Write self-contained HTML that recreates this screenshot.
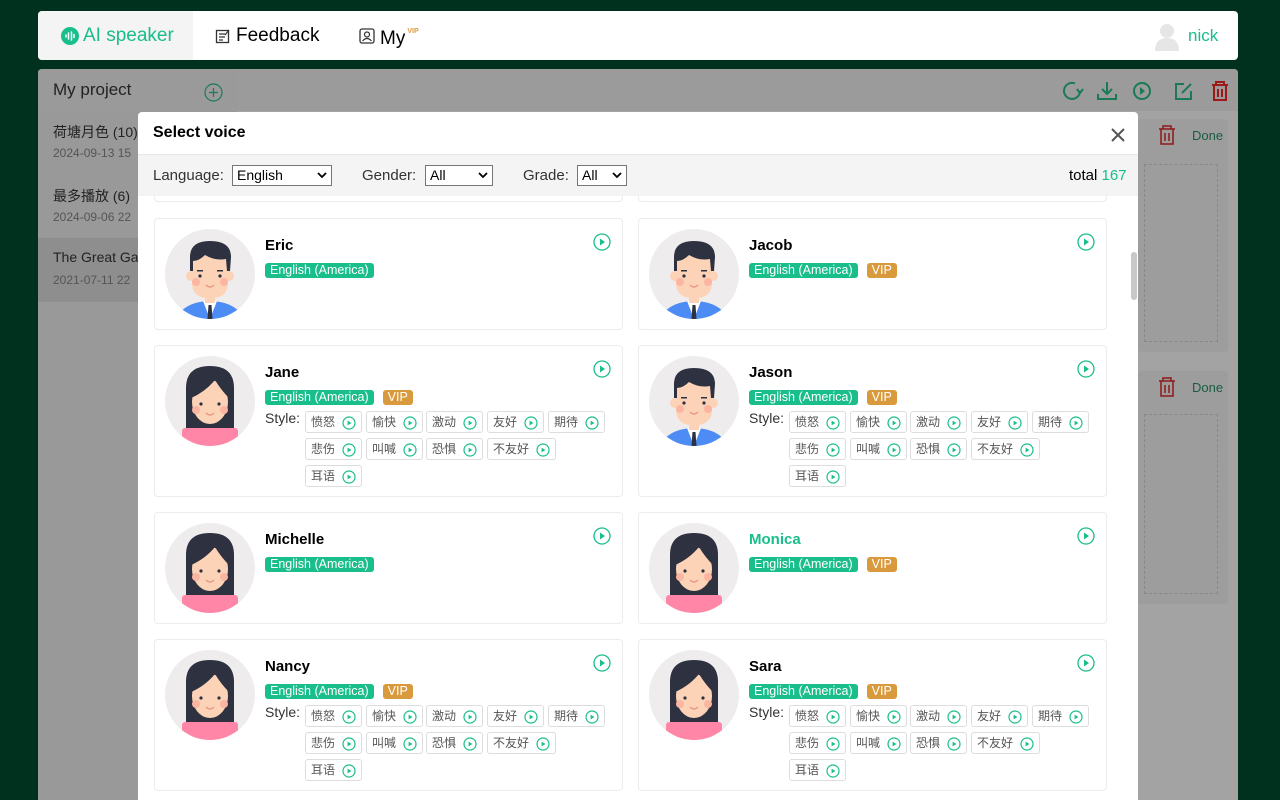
<!DOCTYPE html>
<html style="height:800px;overflow:hidden"><head><meta charset="utf-8">
<style>
*{box-sizing:border-box;margin:0;padding:0}
body{width:1280px;height:800px;overflow:hidden;background:#00311f;font-family:"Liberation Sans","Noto Sans CJK SC",sans-serif;position:relative;color:#000}
.abs{position:absolute}
.top{left:38px;top:11px;width:1200px;height:49px;background:#fff;border-radius:4px;overflow:hidden}
.tab{position:absolute;top:0;height:49px;line-height:49px;font-size:19px}
.main{left:38px;top:69px;width:1200px;height:731px;background:#a3a3a3;border-radius:4px 4px 0 0;overflow:hidden}
.side{left:0;top:0;width:199px;height:731px;background:#999}
.modal{left:138px;top:112px;width:1000px;height:688px;background:#fff;border-radius:4px 4px 0 0;overflow:hidden}
.fb{left:0;top:43px;width:1000px;height:41px;background:#f4f4f4;font-size:15px;color:#333}
.sel{position:absolute;top:10px;height:21px;border:1px solid #767676;background:#fff;font-size:14px;line-height:19px;padding-left:4px;color:#000}
.sel svg{position:absolute;right:4px;top:6px}
.card{position:absolute;width:469px;border:1px solid #ececec;border-radius:4px;background:#fff}
.av{position:absolute;left:10px;top:10px;width:90px;height:90px}
.nm{position:absolute;left:110px;top:18px;font-size:15px;font-weight:bold}
.tags{position:absolute;left:110px;top:44px;height:15px;font-size:12.5px;white-space:nowrap}
.tg{display:inline-block;background:#19be8b;color:#fff;border-radius:3px;padding:0 5px;line-height:15px;height:15px;vertical-align:top}
.vip{display:inline-block;background:#d99a3d;color:#fff;border-radius:3px;padding:0 5px;line-height:15px;height:15px;margin-left:9px;vertical-align:top}
.pl{position:absolute;right:11px;top:14px}
.sty{position:absolute;left:110px;top:64px;font-size:14px;color:#333}
.chips{position:absolute;left:150px;top:65px;width:310px}
.ch{position:absolute;height:22px;border:1px solid #ddd;border-radius:3px;font-size:12px;color:#555;line-height:20px;padding-left:5px;background:#fff}
.ch svg{position:absolute;right:5px;top:4px}
</style></head><body>
<svg width="0" height="0" style="position:absolute">
<defs>
<clipPath id="cc"><circle cx="45" cy="45" r="45"/></clipPath>
<g id="m">
<circle cx="45" cy="45" r="45" fill="#eeecec"/>
<g clip-path="url(#cc)">
<ellipse cx="45" cy="92" rx="33" ry="20" fill="#4e8cf5"/>
<path d="M38 72 L45 90 L52 72Z" fill="#fff"/>
<path d="M43.5 76 L46.5 76 L47.5 90 L42.5 90Z" fill="#2d3140"/>
<rect x="40" y="62" width="10" height="12" fill="#fdd3b8"/>
<circle cx="26" cy="47" r="5" fill="#fdd3b8"/><circle cx="64" cy="47" r="5" fill="#fdd3b8"/>
<rect x="27" y="24" width="36" height="45" rx="14" fill="#fdd3b8"/>
<path d="M25 42 L25 28 Q25 12 45 12 Q66 12 66 28 L65 42 L62 42 L61 30 Q50 32 40 26 Q34 32 28 32 L28 42Z" fill="#2d3140"/>
<rect x="32" y="41" width="6" height="1.5" fill="#2d3140"/><rect x="52" y="41" width="6" height="1.5" fill="#2d3140"/>
<circle cx="35" cy="47" r="1.6" fill="#2d3140"/><circle cx="55" cy="47" r="1.6" fill="#2d3140"/>
<circle cx="31" cy="53" r="4" fill="#fbb5a0"/><circle cx="59" cy="53" r="4" fill="#fbb5a0"/>
<path d="M41 56 Q45 60 49 56" stroke="#e89a80" stroke-width="1.3" fill="none"/>
</g></g>
<g id="f">
<circle cx="45" cy="45" r="45" fill="#eeecec"/>
<g clip-path="url(#cc)">
<path d="M21 75 L21 32 Q21 10 45 10 Q69 10 69 32 L69 75Z" fill="#2d3140"/>
<rect x="17" y="72" width="56" height="25" rx="3" fill="#ff86a7"/>
<ellipse cx="45" cy="46" rx="18" ry="22" fill="#fdd3b8"/>
<path d="M26 42 Q27 20 45 20 Q63 20 64 42 Q56 34 50 24 Q40 36 26 42Z" fill="#2d3140"/>
<circle cx="36" cy="48" r="1.6" fill="#2d3140"/><circle cx="54" cy="48" r="1.6" fill="#2d3140"/>
<circle cx="31" cy="54" r="4" fill="#fbb5a0"/><circle cx="59" cy="54" r="4" fill="#fbb5a0"/>
<path d="M41 57 Q45 61 49 57" stroke="#e89a80" stroke-width="1.3" fill="none"/>
</g></g>
<g id="p"><circle cx="9" cy="9" r="8" fill="none" stroke="#19be8b" stroke-width="1.3"/><path d="M7 5.5 L12 9 L7 12.5Z" fill="#19be8b"/></g>
<g id="sp"><circle cx="7" cy="7" r="6" fill="none" stroke="#19be8b" stroke-width="1.2"/><path d="M5.6 4.6 L9.4 7 L5.6 9.4Z" fill="#19be8b"/></g>
</defs></svg>

<div class="abs top">
 <div class="tab" style="left:0;width:155px;background:#f4f4f4;color:#19be8b;padding-left:23px">
  <svg width="18" height="18" style="position:absolute;left:23px;top:16px"><circle cx="9" cy="9" r="9" fill="#19be8b"/><path d="M5 8v2M7.5 6v6M10.5 5v8M13 7.5v3" stroke="#fff" stroke-width="1.5" stroke-linecap="round"/></svg>
  <span style="margin-left:22px">AI speaker</span></div>
 <div class="tab" style="left:177px">
  <svg width="16" height="16" style="position:absolute;left:0;top:17px"><rect x="1.5" y="2.5" width="12" height="12" fill="none" stroke="#333" stroke-width="1.3"/><path d="M4 6h6M4 9h6M4 12h4M10 7l4-5" stroke="#333" stroke-width="1.2"/></svg>
  <span style="margin-left:21px">Feedback</span></div>
 <div class="tab" style="left:321px">
  <svg width="16" height="16" style="position:absolute;left:0;top:17px"><rect x="1" y="1" width="14" height="14" rx="2" fill="none" stroke="#333" stroke-width="1.3"/><circle cx="8" cy="6.5" r="2.5" fill="none" stroke="#333" stroke-width="1.2"/><path d="M3.5 13 Q8 8 12.5 13" fill="none" stroke="#333" stroke-width="1.2"/></svg>
  <span style="margin-left:21px">My</span><sup style="color:#d99a3d;font-size:7px;font-weight:bold;position:relative;top:-4px;margin-left:2px">VIP</sup></div>
 <svg width="26" height="30" style="position:absolute;left:1116px;top:11px"><circle cx="13" cy="9" r="7" fill="#e6e6e6"/><path d="M1 29 Q1 16 13 16 Q25 16 25 29Z" fill="#e6e6e6"/></svg>
 <div class="tab" style="left:1150px;color:#19be8b;font-size:17px">nick</div>
</div>

<div class="abs main">
 <div class="abs side">
  <div class="abs" style="left:0;top:0;width:199px;height:42px;background:#9a9a9a"></div>
  <div class="abs" style="left:15px;top:11px;font-size:17px;color:#222">My project</div>
  <svg class="abs" style="left:166px;top:14px" width="19" height="19"><circle cx="9.5" cy="9.5" r="8.5" fill="none" stroke="#1a7a56" stroke-width="1.2"/><path d="M9.5 5v9M5 9.5h9" stroke="#1a7a56" stroke-width="1.2"/></svg>
  <div class="abs" style="left:15px;top:53px;font-size:14px;color:#222">荷塘月色 (10)</div>
  <div class="abs" style="left:15px;top:77px;font-size:12px;color:#555">2024-09-13 15</div>
  <div class="abs" style="left:15px;top:117px;font-size:14px;color:#222">最多播放 (6)</div>
  <div class="abs" style="left:15px;top:141px;font-size:12px;color:#555">2024-09-06 22</div>
  <div class="abs" style="left:0;top:169px;width:199px;height:64px;background:#8e8e8e"></div>
  <div class="abs" style="left:15px;top:180px;font-size:14px;color:#222">The Great Ga</div>
  <div class="abs" style="left:15px;top:204px;font-size:12px;color:#555">2021-07-11 22</div>
 </div>
 <div class="abs" style="left:199px;top:0;width:1001px;height:42px;background:#9b9b9b"></div>
 <svg class="abs" style="left:1022px;top:10px" width="190" height="24" fill="none" stroke-width="2">
  <path d="M20 12 A8 8 0 1 1 15 4.5" stroke="#1a7a56"/><path d="M17 10l3 4 3-4" stroke="#1a7a56"/>
  <path d="M47 3v12M42 10l5 5 5-5M38 15v5h18v-5" stroke="#1a7a56"/>
  <circle cx="82" cy="12" r="8" stroke="#1a7a56"/><path d="M80 8l5 4-5 4Z" fill="#1a7a56" stroke="none"/>
  <path d="M124 5h-8v15h15v-8M122 14l9-9" stroke="#1a7a56"/>
  <path d="M152 6h16M156 6V3h8v3M154 6v15h12V6M158 10v8M162 10v8" stroke="#9e1818"/>
 </svg>
 <div class="abs" style="left:1100px;top:50px;width:90px;height:233px;background:#9d9d9d;border-radius:4px"></div>
 <div class="abs" style="left:1100px;top:302px;width:90px;height:233px;background:#9d9d9d;border-radius:4px"></div>
 <div class="abs" style="left:1106px;top:95px;width:74px;height:178px;border:1px dashed #888"></div>
 <div class="abs" style="left:1106px;top:345px;width:74px;height:180px;border:1px dashed #888"></div>
 <div class="abs" style="left:1154px;top:59px;font-size:13px;color:#1a5c40">Done</div>
 <div class="abs" style="left:1154px;top:311px;font-size:13px;color:#1a5c40">Done</div>
 <svg class="abs" style="left:1120px;top:56px" width="18" height="20" fill="none" stroke="#8e1818" stroke-width="1.5"><path d="M1 4h16M5 4V1h8v3M3 4v15h12V4M7 8v8M11 8v8"/></svg>
 <svg class="abs" style="left:1120px;top:308px" width="18" height="20" fill="none" stroke="#8e1818" stroke-width="1.5"><path d="M1 4h16M5 4V1h8v3M3 4v15h12V4M7 8v8M11 8v8"/></svg>
</div>

<div class="abs modal">
 <div class="abs" style="left:15px;top:12px;font-size:16px;font-weight:bold">Select voice</div>
 <svg class="abs" style="left:973px;top:16px" width="14" height="14"><path d="M1 1l12 12M13 1L1 13" stroke="#555" stroke-width="2"/></svg>
 <div class="abs" style="left:0;top:42px;width:1000px;height:1px;background:#e8e8e8"></div>
 <div class="abs" style="left:0;top:84px;width:1000px;height:604px;overflow:hidden">
  <div class="card" style="left:16px;top:-20px;height:26px"></div>
  <div class="card" style="left:500px;top:-20px;height:26px"></div>

  <div class="card" style="left:16px;top:22px;height:112px"><svg class="av" viewBox="0 0 90 90"><use href="#m"/></svg><div class="nm">Eric</div><div class="tags"><span class="tg">English (America)</span></div><svg class="pl" width="18" height="18"><use href="#p"/></svg></div>
  <div class="card" style="left:500px;top:22px;height:112px"><svg class="av" viewBox="0 0 90 90"><use href="#m"/></svg><div class="nm">Jacob</div><div class="tags"><span class="tg">English (America)</span><span class="vip">VIP</span></div><svg class="pl" width="18" height="18"><use href="#p"/></svg></div>

  <div class="card" style="left:16px;top:149px;height:152px"><svg class="av" viewBox="0 0 90 90"><use href="#f"/></svg><div class="nm">Jane</div><div class="tags"><span class="tg">English (America)</span><span class="vip">VIP</span></div><svg class="pl" width="18" height="18"><use href="#p"/></svg><div class="sty">Style:</div><div class="chips">CHIPS</div></div>
  <div class="card" style="left:500px;top:149px;height:152px"><svg class="av" viewBox="0 0 90 90"><use href="#m"/></svg><div class="nm">Jason</div><div class="tags"><span class="tg">English (America)</span><span class="vip">VIP</span></div><svg class="pl" width="18" height="18"><use href="#p"/></svg><div class="sty">Style:</div><div class="chips">CHIPS</div></div>

  <div class="card" style="left:16px;top:316px;height:112px"><svg class="av" viewBox="0 0 90 90"><use href="#f"/></svg><div class="nm">Michelle</div><div class="tags"><span class="tg">English (America)</span></div><svg class="pl" width="18" height="18"><use href="#p"/></svg></div>
  <div class="card" style="left:500px;top:316px;height:112px"><svg class="av" viewBox="0 0 90 90"><use href="#f"/></svg><div class="nm" style="color:#19be8b">Monica</div><div class="tags"><span class="tg">English (America)</span><span class="vip">VIP</span></div><svg class="pl" width="18" height="18"><use href="#p"/></svg></div>

  <div class="card" style="left:16px;top:443px;height:152px"><svg class="av" viewBox="0 0 90 90"><use href="#f"/></svg><div class="nm">Nancy</div><div class="tags"><span class="tg">English (America)</span><span class="vip">VIP</span></div><svg class="pl" width="18" height="18"><use href="#p"/></svg><div class="sty">Style:</div><div class="chips">CHIPS</div></div>
  <div class="card" style="left:500px;top:443px;height:152px"><svg class="av" viewBox="0 0 90 90"><use href="#f"/></svg><div class="nm">Sara</div><div class="tags"><span class="tg">English (America)</span><span class="vip">VIP</span></div><svg class="pl" width="18" height="18"><use href="#p"/></svg><div class="sty">Style:</div><div class="chips">CHIPS</div></div>

  <div class="abs" style="left:993px;top:56px;width:6px;height:48px;background:#c8c8c8;border-radius:3px"></div>
 </div>
 <div class="abs fb">
  <div class="abs" style="left:15px;top:12px">Language:</div>
  <div class="sel" style="left:94px;width:100px">English<svg width="10" height="7"><path d="M1 1l4 4 4-4" stroke="#000" stroke-width="1.8" fill="none"/></svg></div>
  <div class="abs" style="left:224px;top:12px">Gender:</div>
  <div class="sel" style="left:287px;width:68px">All<svg width="10" height="7"><path d="M1 1l4 4 4-4" stroke="#000" stroke-width="1.8" fill="none"/></svg></div>
  <div class="abs" style="left:385px;top:12px">Grade:</div>
  <div class="sel" style="left:439px;width:50px">All<svg width="10" height="7"><path d="M1 1l4 4 4-4" stroke="#000" stroke-width="1.8" fill="none"/></svg></div>
  <div class="abs" style="left:931px;top:12px;color:#000">total <span style="color:#19be8b">167</span></div>
 </div>
</div>
<script>
var items=[["愤怒",0,0,57],["愉快",61,0,57],["激动",121,0,57],["友好",182,0,57],["期待",243,0,57],["悲伤",0,27,57],["叫喊",61,27,57],["恐惧",121,27,57],["不友好",182,27,69],["耳语",0,54,57]];
var h="";items.forEach(function(i){h+='<div class="ch" style="left:'+i[1]+'px;top:'+i[2]+'px;width:'+i[3]+'px">'+i[0]+'<svg width="14" height="14"><use href="#sp"/></svg></div>';});
document.querySelectorAll(".chips").forEach(function(c){c.innerHTML=h;});
</script>
</body></html>
